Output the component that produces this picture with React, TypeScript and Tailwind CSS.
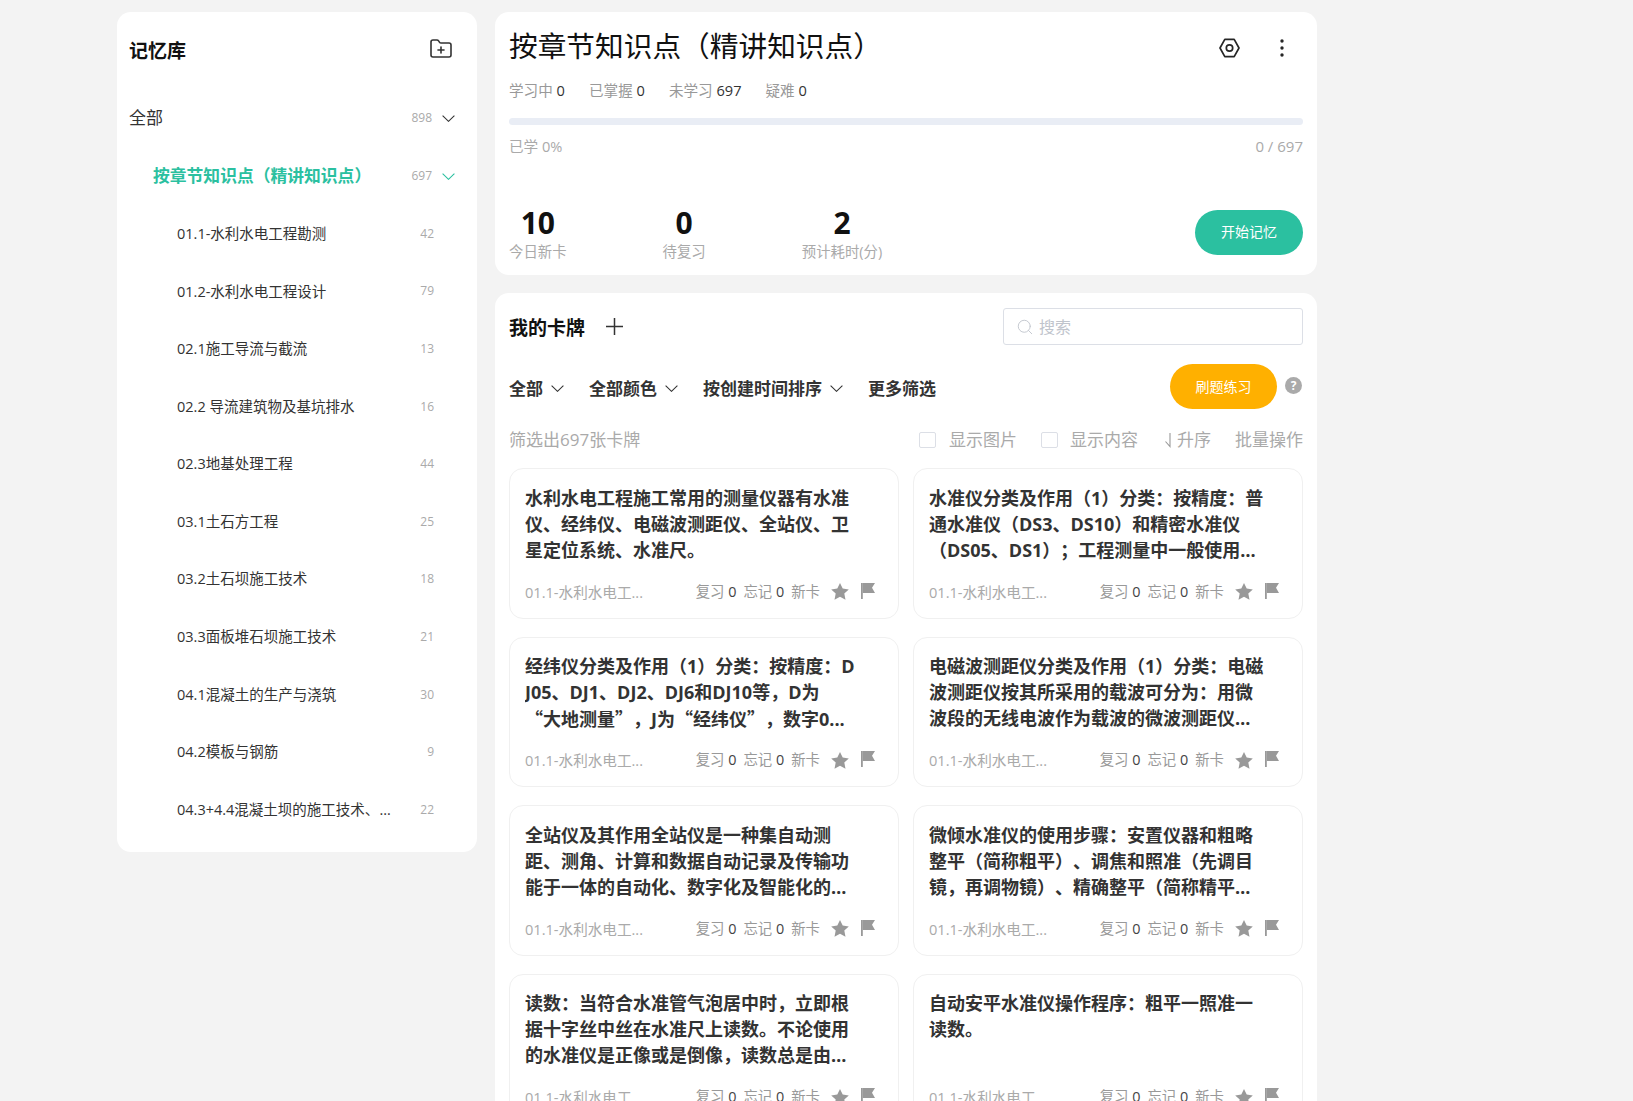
import React from "react";
import { FolderPlus, Search } from "lucide-react";

const items: [string, number][] = [
  ["01.1-水利水电工程勘测", 42],
  ["01.2-水利水电工程设计", 79],
  ["02.1施工导流与截流", 13],
  ["02.2 导流建筑物及基坑排水", 16],
  ["02.3地基处理工程", 44],
  ["03.1土石方工程", 25],
  ["03.2土石坝施工技术", 18],
  ["03.3面板堆石坝施工技术", 21],
  ["04.1混凝土的生产与浇筑", 30],
  ["04.2模板与钢筋", 9],
  ["04.3+4.4混凝土坝的施工技术、质量和安全管理", 22],
];

function Q({ c }: { c: string }) {
  return <span className="font-['Noto_Sans_CJK_SC',sans-serif]">{c}</span>;
}

const cards: React.ReactNode[] = [
  "水利水电工程施工常用的测量仪器有水准仪、经纬仪、电磁波测距仪、全站仪、卫星定位系统、水准尺。",
  "水准仪分类及作用（1）分类：按精度：普通水准仪（DS3、DS10）和精密水准仪（DS05、DS1）；工程测量中一般使用DS3型微倾式普通水准仪。其中D、S分别代表大地测量和水准仪。",
  <>经纬仪分类及作用（1）分类：按精度：DJ05、DJ1、DJ2、DJ6和DJ10等，D为<br /><Q c="“" />大地测量<Q c="”" />，J为<Q c="“" />经纬仪<Q c="”" />，数字0...</>,
  "电磁波测距仪分类及作用（1）分类：电磁波测距仪按其所采用的载波可分为：用微波段的无线电波作为载波的微波测距仪、用激光作为载波的激光测距仪。",
  "全站仪及其作用全站仪是一种集自动测距、测角、计算和数据自动记录及传输功能于一体的自动化、数字化及智能化的三维坐标测量与定位系统。",
  "微倾水准仪的使用步骤：安置仪器和粗略整平（简称粗平）、调焦和照准（先调目镜，再调物镜）、精确整平（简称精平和读数四个步骤）。",
  "读数：当符合水准管气泡居中时，立即根据十字丝中丝在水准尺上读数。不论使用的水准仪是正像或是倒像，读数总是由注记小的一端向大的一端读出。",
  "自动安平水准仪操作程序：粗平一照准一读数。",
];

function Chevron({ color = "#333333" }: { color?: string }) {
  return (
    <svg width="13" height="7" viewBox="0 0 13 7" fill="none" stroke={color} strokeWidth="1.1" className="shrink-0">
      <path d="M.6.6l5.9 5.7L12.4.6" />
    </svg>
  );
}

function Nut() {
  return (
    <svg width="21" height="20" viewBox="0 0 21 20" fill="none" stroke="#262626" strokeWidth="1.7">
      <path d="M5.8 1.3h9.4l4.8 8.7-4.8 8.7H5.8L1 10z" strokeLinejoin="round" />
      <circle cx="10.5" cy="10" r="3.2" />
    </svg>
  );
}

function Dots() {
  return (
    <svg width="4" height="18" viewBox="0 0 4 18" fill="#262626">
      <circle cx="2" cy="2" r="1.7" />
      <circle cx="2" cy="9" r="1.7" />
      <circle cx="2" cy="16" r="1.7" />
    </svg>
  );
}

function Star() {
  return (
    <svg width="18" height="17" viewBox="0 0 18 17" fill="#999999">
      <path d="M9 0l2.7 5.6 6.1.8-4.5 4.2 1.2 6.1L9 13.8l-5.5 2.9 1.2-6.1L.2 6.4l6.1-.8z" />
    </svg>
  );
}

function Flag() {
  return (
    <svg width="14" height="16" viewBox="0 0 14 16" fill="#999999">
      <path d="M0 0h1.8v16H0z" />
      <path d="M1.8 0H14l-3 4.8 3 5.2H1.8z" />
    </svg>
  );
}

function HalfArrow() {
  return (
    <svg width="9" height="16" viewBox="0 0 9 16" fill="none" stroke="#999999" strokeWidth="1.1">
      <path d="M7 1v13.5L2.5 9.5" />
    </svg>
  );
}

function PlusIcon() {
  return (
    <svg width="17" height="17" viewBox="0 0 17 17" fill="none" stroke="#333333" strokeWidth="1.5">
      <path d="M8.5 0v17M0 8.5h17" />
    </svg>
  );
}

function Card({ text }: { text: React.ReactNode }) {
  return (
    <div className="flex flex-col rounded-[14px] border border-[#f0f0f0] bg-white pl-[15px] pr-[23px] pt-[15.5px] pb-[16px] h-[150.5px]">
      <div className="w-[335px] text-[18px] leading-[26px] font-bold text-[#333333] line-clamp-3 break-all">{text}</div>
      <div className="mt-auto flex items-center justify-between h-[20px] text-[14.6px]">
        <span className="translate-y-[1px] text-[#aaaaaa]">01.1-水利水电工...</span>
        <div className="flex items-center gap-[7px] text-[14.4px]">
          <span className="text-[#999999]">复习 <span className="text-[#444444]">0</span></span>
          <span className="text-[#999999]">忘记 <span className="text-[#444444]">0</span></span>
          <span className="text-[#999999]">新卡</span>
          <span className="ml-[4px] flex"><Star /></span>
          <span className="ml-[5px] flex -translate-y-[1px]"><Flag /></span>
        </div>
      </div>
    </div>
  );
}

function FilterItem({ label }: { label: string }) {
  return (
    <div className="flex items-center gap-[8px] text-[17px] font-bold text-[#333333]">
      <span>{label}</span>
      <Chevron />
    </div>
  );
}

export default function App() {
  return (
    <div className="h-screen overflow-hidden bg-[#f3f3f3] pl-[117px] pt-[12px] flex items-start gap-[18px] font-['Open_Sans','Noto_Sans_CJK_SC',sans-serif] [text-spacing-trim:space-all]">
      <aside className="w-[360px] h-[840px] shrink-0 rounded-[14px] bg-white">
        <div className="flex h-[77px] items-center justify-between pl-[12px] pr-[24px]">
          <span className="translate-y-[1px] text-[19px] font-bold text-[#111111]">记忆库</span>
          <span className="-translate-y-[2px]"><FolderPlus size={24} strokeWidth={1.6} color="#333333" /></span>
        </div>
        <div className="flex h-[58px] items-center pl-[12px] pr-[22px] text-[17px] text-[#333333]">
          <span className="flex-1">全部</span>
          <span className="text-[12px] text-[#aaaaaa]">898</span>
          <span className="ml-[10px]"><Chevron /></span>
        </div>
        <div className="flex h-[58px] items-center pl-[36px] pr-[22px] text-[16.8px] font-bold text-[#2bc0a0]">
          <span className="flex-1">按章节知识点（精讲知识点）</span>
          <span className="text-[12px] font-normal text-[#aaaaaa]">697</span>
          <span className="ml-[10px]"><Chevron color="#2bc0a0" /></span>
        </div>
        {items.map(([name, n]) => (
          <div key={name} className="flex h-[57.6px] items-center justify-between pl-[60px] pr-[43px]">
            <span className="w-[218px] truncate text-[14.5px] text-[#333333]">{name}</span>
            <span className="text-[12px] text-[#aaaaaa]">{n}</span>
          </div>
        ))}
      </aside>

      <main className="w-[822px] shrink-0 flex flex-col gap-[18px]">
        <section className="h-[263px] rounded-[14px] bg-white px-[14px]">
          <div className="flex h-[68px] items-center justify-between">
            <h1 className="text-[28.7px] font-normal text-[#111111]">按章节知识点（精讲知识点）</h1>
            <div className="flex translate-y-[2px] items-center gap-[40px] pr-[19px]">
              <Nut />
              <Dots />
            </div>
          </div>
          <div className="flex h-[21px] items-center gap-[24px] text-[14.6px] text-[#999999]">
            <span>学习中 <span className="text-[#333333]">0</span></span>
            <span>已掌握 <span className="text-[#333333]">0</span></span>
            <span>未学习 <span className="text-[#333333]">697</span></span>
            <span>疑难 <span className="text-[#333333]">0</span></span>
          </div>
          <div className="mt-[17px] h-[7px] rounded-full bg-[#e9edf5]" />
          <div className="mt-[11px] flex h-[21px] items-center justify-between text-[14.6px] text-[#aaaaaa]">
            <span>已学 0%</span>
            <span className="text-[15px]">0 / 697</span>
          </div>
          <div className="mt-[49px] flex items-start justify-between">
            <div className="flex gap-[96px]">
              {[["10", "今日新卡"], ["0", "待复习"], ["2", "预计耗时(分)"]].map(([v, l]) => (
                <div key={l} className="flex flex-col items-center">
                  <span className="text-[30px] leading-[34px] font-bold text-[#111111]">{v}</span>
                  <span className="mt-[2px] text-[14.4px] leading-[20px] text-[#aaaaaa]">{l}</span>
                </div>
              ))}
            </div>
            <button className="mt-[4px] h-[45px] w-[108px] rounded-full bg-[#2bc0a0] pb-[2px] text-[14px] text-white">开始记忆</button>
          </div>
        </section>

        <section className="rounded-[14px] bg-white px-[14px] pt-[15px]">
          <div className="flex h-[37px] items-center justify-between">
            <div className="flex items-center gap-[21px]">
              <span className="translate-y-[2px] text-[19px] font-bold text-[#111111]">我的卡牌</span>
              <PlusIcon />
            </div>
            <div className="flex h-[37px] w-[300px] items-center gap-[5px] rounded-[3px] border border-[#dcdfe6] pl-[12px]">
              <Search size={18} strokeWidth={1.2} color="#c0c4cc" />
              <span className="text-[16px] text-[#c0c4cc]">搜索</span>
            </div>
          </div>

          <div className="mt-[19px] flex h-[45px] items-center justify-between">
            <div className="flex items-center gap-[25px] translate-y-[2px]">
              <FilterItem label="全部" />
              <FilterItem label="全部颜色" />
              <FilterItem label="按创建时间排序" />
              <span className="text-[17px] font-bold text-[#333333]">更多筛选</span>
            </div>
            <div className="flex items-center gap-[8px] pr-[1px]">
              <button className="h-[45px] w-[107px] rounded-full bg-[#ffb000] text-[14px] text-white">刷题练习</button>
              <span className="flex h-[17px] w-[17px] -translate-y-[1px] items-center justify-center rounded-full bg-[#aaaaaa] text-[12px] font-bold text-white">?</span>
            </div>
          </div>

          <div className="mt-[19px] -mb-[1px] flex h-[24px] items-center justify-between text-[17px] text-[#aaaaaa]">
            <span>筛选出697张卡牌</span>
            <div className="flex items-center">
              <span className="h-[16px] w-[17px] rounded-[2px] border border-[#dcdfe6]" />
              <span className="ml-[13px]">显示图片</span>
              <span className="ml-[24px] h-[16px] w-[17px] rounded-[2px] border border-[#dcdfe6]" />
              <span className="ml-[12px]">显示内容</span>
              <span className="ml-[25px] flex items-center gap-[5px]"><HalfArrow />升序</span>
              <span className="ml-[24px]">批量操作</span>
            </div>
          </div>

          <div className="mt-[17px] grid grid-cols-2 gap-x-[14px] gap-y-[18px]">
            {cards.map((c, i) => <Card key={i} text={c} />)}
          </div>
        </section>
      </main>
    </div>
  );
}
